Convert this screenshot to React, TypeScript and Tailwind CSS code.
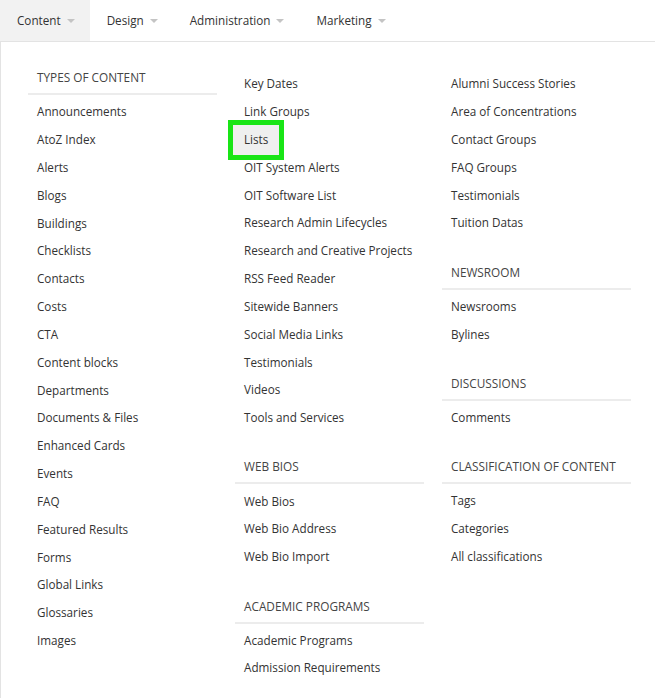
import React from "react";

type Section = { title?: string; items: string[]; highlight?: string };

const columns: Section[][] = [
  [
    {
      title: "Types of Content",
      items: [
        "Announcements",
        "AtoZ Index",
        "Alerts",
        "Blogs",
        "Buildings",
        "Checklists",
        "Contacts",
        "Costs",
        "CTA",
        "Content blocks",
        "Departments",
        "Documents & Files",
        "Enhanced Cards",
        "Events",
        "FAQ",
        "Featured Results",
        "Forms",
        "Global Links",
        "Glossaries",
        "Images",
      ],
    },
  ],
  [
    {
      items: [
        "Key Dates",
        "Link Groups",
        "Lists",
        "OIT System Alerts",
        "OIT Software List",
        "Research Admin Lifecycles",
        "Research and Creative Projects",
        "RSS Feed Reader",
        "Sitewide Banners",
        "Social Media Links",
        "Testimonials",
        "Videos",
        "Tools and Services",
      ],
      highlight: "Lists",
    },
    { title: "Web Bios", items: ["Web Bios", "Web Bio Address", "Web Bio Import"] },
    { title: "Academic Programs", items: ["Academic Programs", "Admission Requirements"] },
  ],
  [
    {
      items: [
        "Alumni Success Stories",
        "Area of Concentrations",
        "Contact Groups",
        "FAQ Groups",
        "Testimonials",
        "Tuition Datas",
      ],
    },
    { title: "Newsroom", items: ["Newsrooms", "Bylines"] },
    { title: "Discussions", items: ["Comments"] },
    { title: "Classification of Content", items: ["Tags", "Categories", "All classifications"] },
  ],
];

const tabs = ["Content", "Design", "Administration", "Marketing"];

function Caret() {
  return <span className="ml-[6px] inline-block h-0 w-0 border-x-[4px] border-t-[4px] border-x-transparent border-t-[#c4c4c4]" />;
}

export default function App() {
  return (
    <div className="min-h-[700px] bg-white text-[#333] [font-family:'Open_Sans',sans-serif]">
      <nav className="flex h-[42px] border-b border-[#e3e3e3]">
        {tabs.map((t, i) => (
          <div
            key={t}
            className={`flex items-center pl-[17px] pr-[15px] text-[11.7px] ${i === 0 ? "bg-[#f2f2f2]" : ""}`}
          >
            {t}
            <Caret />
          </div>
        ))}
      </nav>

      <div className="flex gap-[18px] border-l border-[#e3e3e3] pl-[27px] pt-[28px] pb-4">
        {columns.map((col, ci) => (
          <div key={ci} className="flex w-[189px] flex-col">
            {col.map((sec, si) => (
              <div key={si} className={si === 0 ? "" : "mt-[27.5px]"}>
                {sec.title && (
                  <div className="border-b-2 border-[#ececec] px-[9px] pb-[9px] text-[11.8px] leading-[14px] text-[#444] uppercase">
                    {sec.title}
                  </div>
                )}
                <ul className={sec.title ? "pt-[3px]" : ""}>
                  {sec.items.map((it) => (
                    <li key={it} className="flex h-[27.85px] items-center text-[11.7px] whitespace-nowrap">
                      {it === sec.highlight ? (
                        <span className="-ml-[2px] flex h-[30px] items-center bg-[#efefef] pr-[11px] pl-[11px] outline-[5px] outline-[#19e516] outline-solid">
                          {it}
                        </span>
                      ) : (
                        <span className="px-[9px]">{it}</span>
                      )}
                    </li>
                  ))}
                </ul>
              </div>
            ))}
          </div>
        ))}
      </div>
    </div>
  );
}
